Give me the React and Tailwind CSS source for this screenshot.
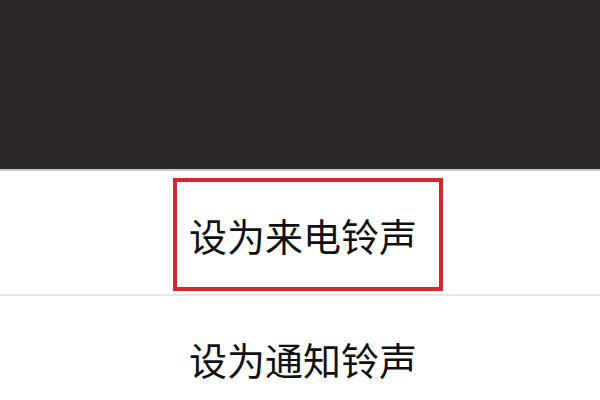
const font = { fontFamily: '"Noto Sans CJK SC", "Noto Sans", sans-serif' };

export default function App() {
  return (
    <div className="w-[600px] h-[400px] overflow-hidden bg-white" style={font}>
      <div className="h-[171px] bg-[#2c282a] border-b-2 border-[#c9c9c9]" />
      <div className="h-[123px] flex justify-center pt-[7px] pl-[16px]">
        <div className="w-[270px] h-[113px] border-4 border-[#d5262f] flex items-center pl-[12px]">
          <span className="text-[38px] leading-none text-[#111111]">设为来电铃声</span>
        </div>
      </div>
      <div className="h-[2px] bg-[#e6e6e6]" />
      <div className="h-[126px] flex items-center justify-center pl-[6px]">
        <span className="text-[38px] leading-none text-[#111111]">设为通知铃声</span>
      </div>
    </div>
  );
}
